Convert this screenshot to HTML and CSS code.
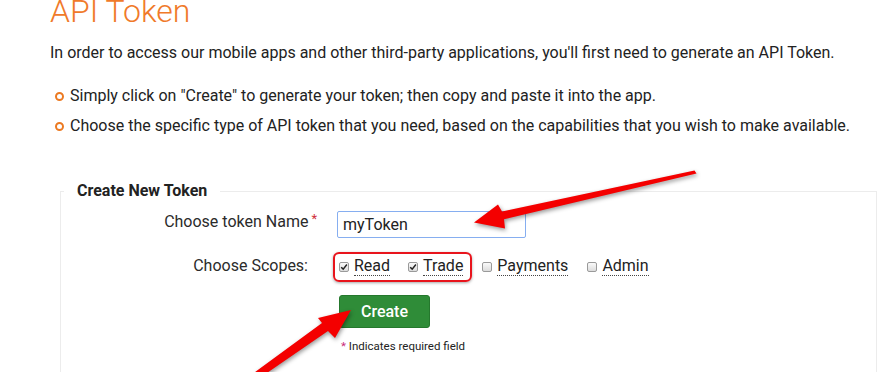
FILE: index.html
```html
<!DOCTYPE html>
<html>
<head>
<meta charset="utf-8">
<link rel="stylesheet" href="styles.css">
</head>
<body>
<div class="page">
  <h1 class="title">API Token</h1>
  <p class="intro">In order to access our mobile apps and other third-party applications, you'll first need to generate an API Token.</p>
  <ul class="bullets">
    <li><span class="ring"></span><span>Simply click on "Create" to generate your token; then copy and paste it into the app.</span></li>
    <li><span class="ring"></span><span>Choose the specific type of API token that you need, based on the capabilities that you wish to make available.</span></li>
  </ul>
  <fieldset class="panel">
    <legend class="panel-title">Create New Token</legend>
    <div class="form">
      <label class="lbl lbl-name">Choose token Name<span class="req">*</span></label>
      <div class="ctl"><div class="input">myToken</div></div>

      <label class="lbl lbl-scopes">Choose Scopes:</label>
      <div class="ctl scopes">
        <div class="hl">
          <span class="cb on"><svg viewBox="0 0 10 10" width="8" height="8"><path d="M1.5 5.2 L4 7.6 L8.6 1.8" fill="none" stroke="#222" stroke-width="1.8"/></svg></span><span class="opt">Read</span>
          <span class="cb on gap"><svg viewBox="0 0 10 10" width="8" height="8"><path d="M1.5 5.2 L4 7.6 L8.6 1.8" fill="none" stroke="#222" stroke-width="1.8"/></svg></span><span class="opt">Trade</span>
        </div>
        <span class="cb first"></span><span class="opt">Payments</span>
        <span class="cb gap2"></span><span class="opt">Admin</span>
      </div>

      <div></div>
      <div class="ctl"><button class="btn">Create</button></div>

      <div></div>
      <div class="ctl"><p class="note"><span class="req2">*</span> Indicates required field</p></div>
    </div>
  </fieldset>
  <svg class="arrows" width="894" height="372" viewBox="0 0 894 372">
    <polygon points="694.5,170.5 502,211.5 498,204.5 474,222.5 505,228.5 504,219.3 696.5,173.5" fill="#f40000"/>
    <polygon points="318,318 351,310 335,338 328,331 264,375 251,375 322,323" fill="#f40000"/>
  </svg>
</div>
</body>
</html>
```
FILE: styles.css
```css
html, body {
  margin: 0;
  padding: 0;
  background: #fff;
}
body {
  font-family: Roboto, "Noto Sans", Arial, sans-serif;
  color: #2b2b2b;
  width: 894px;
  height: 372px;
  overflow: hidden;
}
.page {
  position: relative;
  padding-left: 50px;
  width: 844px;
  height: 372px;
  overflow: hidden;
}
.title {
  margin: -7px 0 0 0;
  font-size: 32px;
  line-height: 36px;
  font-weight: 300;
  color: #f07a2a;
}
.intro {
  margin: 11.5px 0 0 0;
  font-size: 16px;
  line-height: 24px;
  color: #222;
}
.bullets {
  list-style: none;
  margin: 19px 0 0 0;
  padding: 0 0 0 5px;
}
.bullets li {
  display: flex;
  align-items: flex-start;
  gap: 6px;
  font-size: 16px;
  line-height: 24px;
  color: #222;
  margin-bottom: 6px;
}
.bullets li:last-child {
  margin-bottom: 0;
}
.ring {
  flex: none;
  width: 9px;
  height: 9px;
  box-sizing: border-box;
  border: 2px solid #ec7a22;
  border-radius: 50%;
  margin-top: 8px;
}
.panel {
  margin: 43.5px 17px 0 10px;
  padding: 0 0 40px 3px;
  border: 1px solid #ececec;
  border-bottom: none;
  min-width: 0;
}
.panel-title {
  padding: 0 13px;
  font-size: 16px;
  line-height: 20px;
  font-weight: 700;
  color: #222;
}
.form {
  margin-top: 10px;
  display: grid;
  grid-template-columns: 244px 1fr;
  column-gap: 29px;
}
.lbl {
  text-align: right;
  font-size: 16px;
  line-height: 20px;
  color: #2b2b2b;
}
.lbl-name {
  padding-top: 0.5px;
  height: 27px;
}
.lbl-scopes {
  margin-top: 13px;
  padding-top: 4.5px;
}
.req {
  color: #d0303a;
  font-size: 13px;
  vertical-align: top;
  line-height: 14px;
  margin-left: 3px;
  margin-right: -9px;
}
.ctl {
  display: flex;
  align-items: center;
}
.input {
  box-sizing: border-box;
  width: 189px;
  height: 27px;
  border: 1px solid #86aef0;
  border-radius: 2px;
  padding: 0 5px;
  font-size: 16px;
  line-height: 25px;
  color: #222;
}
.scopes {
  margin-top: 13px;
  height: 30px;
}
.hl {
  display: flex;
  align-items: center;
  box-sizing: border-box;
  height: 30px;
  margin-left: -4px;
  padding: 0 7px 0 4px;
  border: 2px solid #e8141c;
  border-radius: 6px;
  box-shadow: 0 1px 3px rgba(0,0,0,0.35);
}
.cb {
  flex: none;
  box-sizing: border-box;
  width: 10px;
  height: 10px;
  border: 1px solid #9a9a9a;
  border-radius: 2px;
  background: linear-gradient(#fafafa, #dcdcdc);
  display: flex;
  align-items: center;
  justify-content: center;
  margin-right: 5px;
}
.cb svg {
  display: block;
}
.cb.gap {
  margin-left: 18px;
}
.cb.first {
  margin-left: 10px;
}
.cb.gap2 {
  margin-left: 19px;
}
.opt {
  font-size: 16px;
  line-height: 18px;
  color: #222;
  border-bottom: 1px dotted #444;
}
.btn {
  margin-top: 13px;
  margin-left: 2px;
  box-sizing: border-box;
  width: 91px;
  height: 33px;
  background: #2f8c38;
  border: 1px solid #25782d;
  border-radius: 3px;
  color: #fff;
  font-family: Roboto, "Noto Sans", Arial, sans-serif;
  font-size: 16px;
  font-weight: 500;
  padding: 0;
}
.note {
  margin: 10px 0 0 4px;
  font-size: 11.5px;
  line-height: 16px;
  color: #222;
}
.req2 {
  color: #c8287a;
}
.arrows {
  position: absolute;
  left: 0;
  top: 0;
  pointer-events: none;
  filter: drop-shadow(1px 2px 2px rgba(0,0,0,0.4));
}
```
